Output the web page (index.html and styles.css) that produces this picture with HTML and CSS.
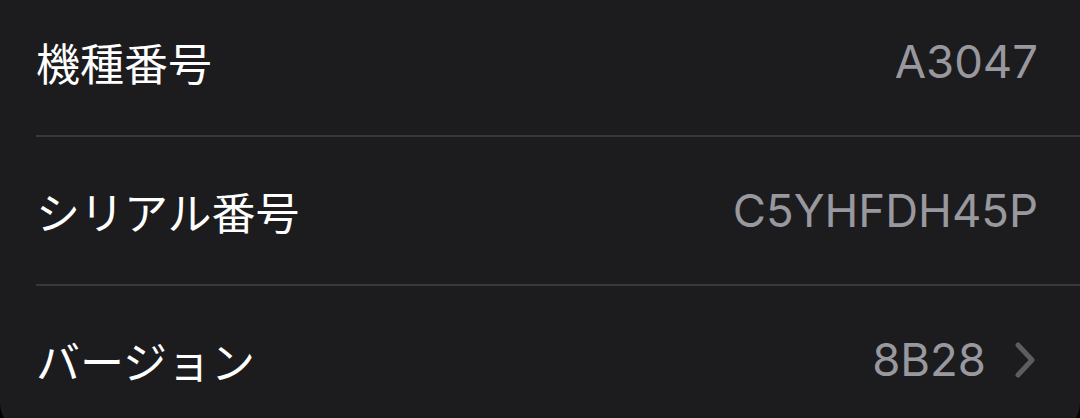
FILE: index.html
```html
<!DOCTYPE html>
<html lang="ja">
<head>
<meta charset="utf-8">
<link rel="stylesheet" href="styles.css">
</head>
<body>
<div class="card">
  <div class="row">
    <div class="row-inner">
      <span class="label">機種番号</span>
      <span class="value">A3047</span>
    </div>
  </div>
  <div class="row">
    <div class="row-inner">
      <span class="label">シリアル番号</span>
      <span class="value">C5YHFDH45P</span>
    </div>
  </div>
  <div class="row row-last">
    <div class="row-inner">
      <span class="label">バージョン</span>
      <span class="value-group">
        <span class="value">8B28</span>
        <svg class="chevron" width="20" height="36" viewBox="0 0 20 36" aria-hidden="true">
          <polyline points="3,3 17,18 3,33" fill="none" stroke="#5c5c61" stroke-width="5" stroke-linecap="round" stroke-linejoin="round"/>
        </svg>
      </span>
    </div>
  </div>
</div>
</body>
</html>
```

FILE: styles.css
```css
html, body {
  margin: 0;
  padding: 0;
  background: #000;
  overflow: hidden;
  height: 418px;
}

.card {
  background: #1c1c1e;
  margin-top: -12px;
  border-radius: 0 0 30px 30px;
  font-family: "Noto Sans CJK JP", "Inter", sans-serif;
}

.row {
  padding-left: 36px;
}

.row-inner {
  height: 147px;
  display: flex;
  align-items: center;
  justify-content: space-between;
  padding-right: 42px;
  border-bottom: 2px solid #38383b;
}

.row-last .row-inner {
  border-bottom: none;
}

.label {
  color: #ffffff;
  font-size: 44px;
  line-height: 1;
  font-family: "Noto Sans CJK JP", sans-serif;
}

.value {
  color: #98989e;
  font-family: "Inter", "Noto Sans", sans-serif;
  font-size: 45.5px;
  line-height: 1;
}

.value-group {
  display: flex;
  align-items: center;
  gap: 29px;
}

.chevron {
  display: block;
  margin-right: 3px;
}
```
